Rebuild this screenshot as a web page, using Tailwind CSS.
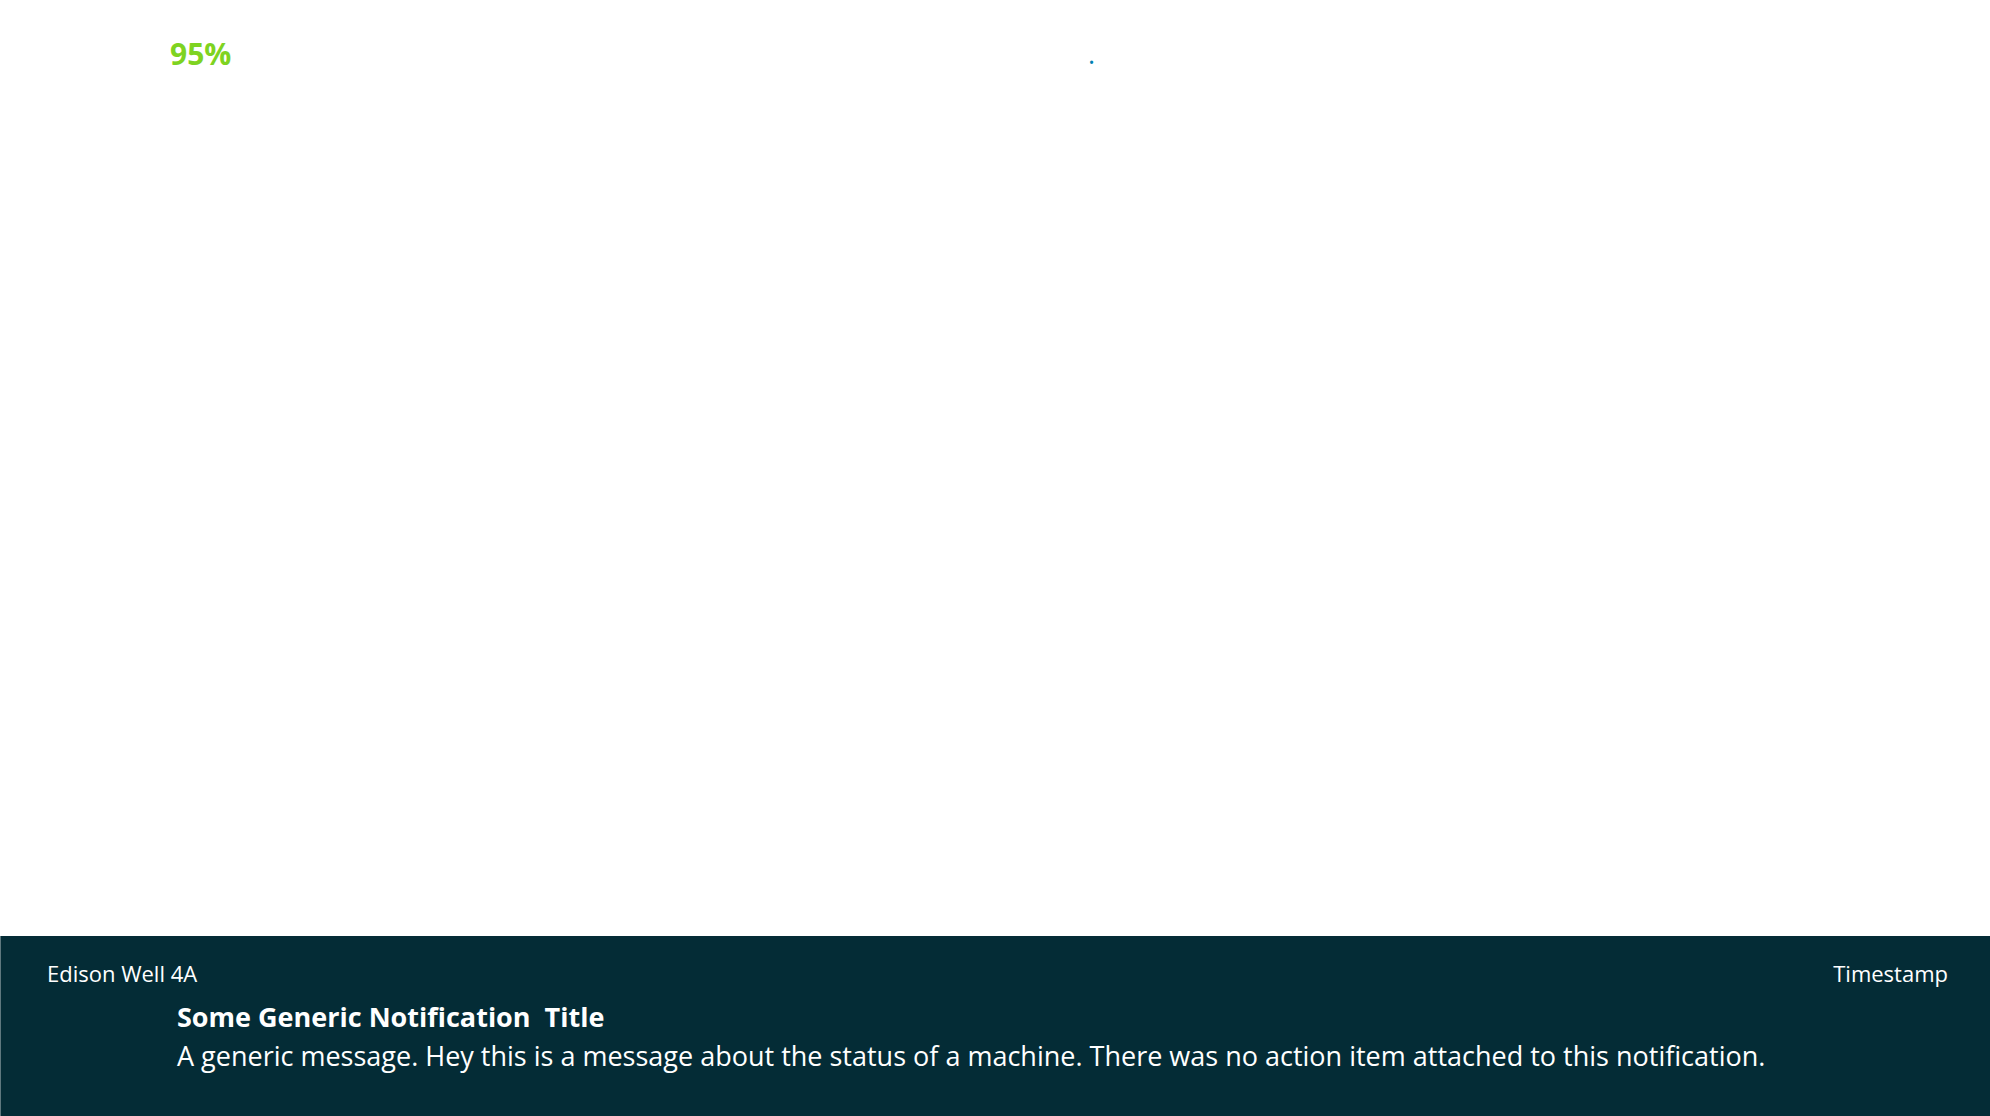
<!DOCTYPE html>
<html lang="en">
<head>
<meta charset="utf-8">
<meta name="viewport" content="width=device-width, initial-scale=1">
<title>Notifications</title>
<script src="https://cdn.jsdelivr.net/npm/@tailwindcss/browser@4"></script>
</head>
<body class="flex min-h-screen flex-col bg-white font-['Open_Sans','Noto_Sans',sans-serif]">
<main class="grid flex-1 grid-cols-2 pt-9">
<p class="pl-[170px] text-[30px] leading-9 font-bold text-[#7ed321]">95%</p>
<p class="pl-[93px] text-[27px] leading-9 text-[#007fb0]">.</p>
</main>
<section class="border-l border-[#5f787e] bg-[#042c36] pt-[19px] pr-[42px] pb-[39px] pl-[46px] text-white">
<header class="flex justify-between text-[22px] leading-9">
<span>Edison Well 4A</span>
<span>Timestamp</span>
</header>
<div class="pt-2 pl-[130px]">
<h2 class="text-[27px] leading-9 font-bold whitespace-pre">Some Generic Notification  Title</h2>
<p class="text-[27px] leading-[42px]">A generic message. Hey this is a message about the status of a machine. There was no action item attached to this notification.</p>
</div>
</section>
</body>
</html>
